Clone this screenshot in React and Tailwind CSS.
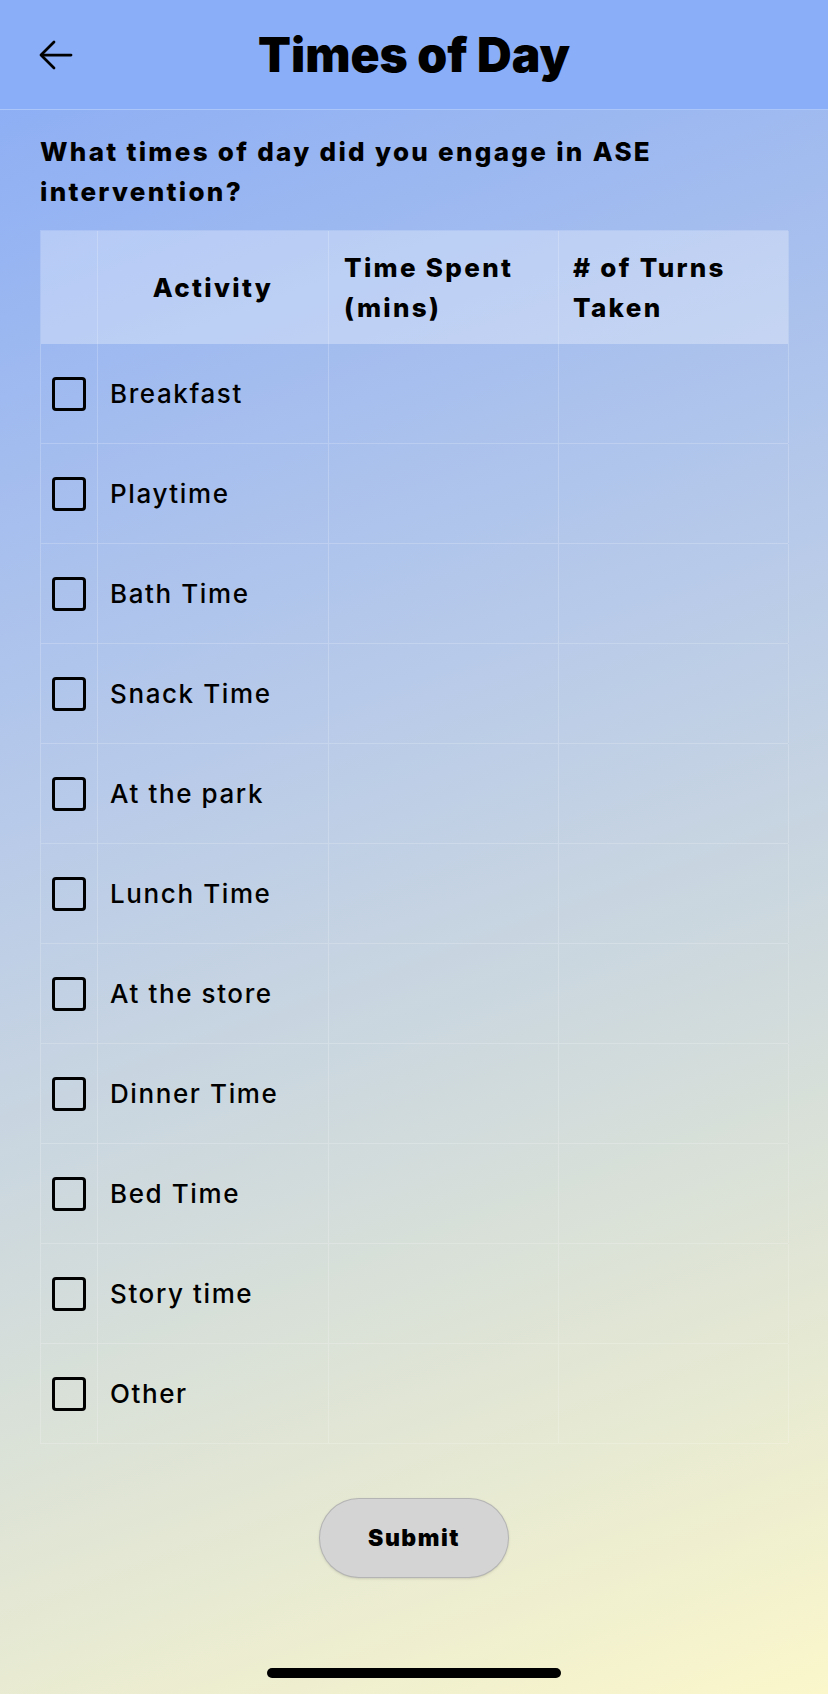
import React from 'react';

const activities = [
    'Breakfast', 'Playtime', 'Bath Time', 'Snack Time', 'At the park', 'Lunch Time',
    'At the store', 'Dinner Time', 'Bed Time', 'Story time', 'Other',
];

const App = () => {
    return (
        <div className="relative min-h-[1694px] w-[828px] bg-[linear-gradient(160deg,#88abf6_0%,#b6c9ea_40%,#dde3d6_75%,#fbf7cb_100%)] font-['Inter',sans-serif] text-black">
            {/* Top bar */}
            <div className="relative flex h-[110px] items-center justify-center border-b border-white/30 bg-[#8aaef7]">
                <button className="absolute left-[38px] top-[39px]">
                    <svg width="36" height="32" viewBox="0 0 36 32" fill="none" stroke="black" strokeWidth="2.75" strokeLinecap="round" strokeLinejoin="round">
                        <path d="M33 16H4" />
                        <path d="M16 3L3 16l13 13" />
                    </svg>
                </button>
                <h1 className="text-[48px] font-black">Times of Day</h1>
            </div>

            <div className="px-[40px] pt-[22px]">
                <h2 className="text-[26px] font-extrabold leading-[40px] tracking-[2.3px]">
                    What times of day did you engage in ASE intervention?
                </h2>

                {/* Table */}
                <div className="mt-[18px] border-l border-t border-white/20">
                    <div className="grid h-[113px] grid-cols-[57px_231px_230px_230px] bg-white/30 text-[26px] font-extrabold leading-[40px] tracking-[2.3px]">
                        <div className="border-r border-white/20" />
                        <div className="flex items-center justify-center border-r border-white/20">Activity</div>
                        <div className="flex items-center border-r border-white/20 px-[15px]">
                            <span>Time Spent<br />(mins)</span>
                        </div>
                        <div className="flex items-center border-r border-white/20 px-[14px]">
                            <span># of Turns<br />Taken</span>
                        </div>
                    </div>
                    {activities.map((name) => (
                        <div key={name} className="grid h-[100px] grid-cols-[57px_231px_230px_230px] border-b border-white/20">
                            <div className="flex items-center justify-center border-r border-white/20">
                                <div className="h-[34px] w-[34px] rounded-[4px] border-[3px] border-black" />
                            </div>
                            <div className="flex items-center border-r border-white/20 pl-[12px] text-[26px] font-medium tracking-[1.6px]">{name}</div>
                            <div className="border-r border-white/20" />
                            <div className="border-r border-white/20" />
                        </div>
                    ))}
                </div>

                <div className="mt-[54px] flex justify-center">
                    <button className="h-[80px] w-[190px] rounded-full border border-black/15 bg-[#d4d4d4] text-[23px] font-black tracking-[1.5px] shadow-sm">
                        Submit
                    </button>
                </div>
            </div>

            <div className="absolute bottom-[16px] left-[267px] h-[10px] w-[294px] rounded-full bg-black" />
        </div>
    );
};

export default App;
